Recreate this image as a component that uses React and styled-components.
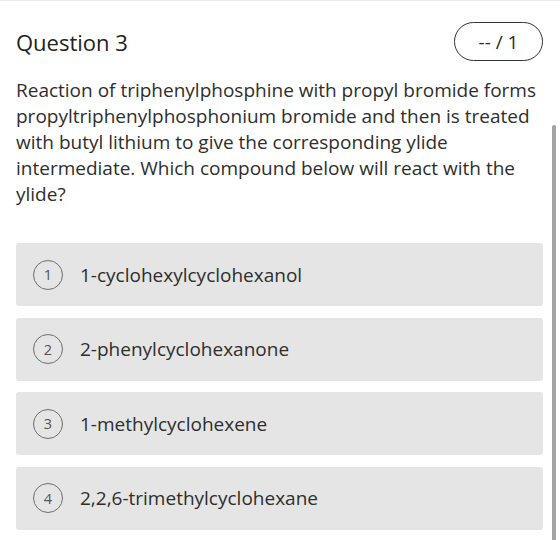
import React from "react";
import styled, { createGlobalStyle } from "styled-components";

const GlobalStyle = createGlobalStyle`
  html, body {
    margin: 0;
    padding: 0;
    background: #ffffff;
  }

  body {
    font-family: "Open Sans", "Liberation Sans", sans-serif;
    color: #2e2e2e;
  }
`;

const choices = [
  "1-cyclohexylcyclohexanol",
  "2-phenylcyclohexanone",
  "1-methylcyclohexene",
  "2,2,6-trimethylcyclohexane",
];

const App = () => {
  return (
    <>
      <GlobalStyle />
      <Container>
        <Header>
          <Title>Question 3</Title>
          <Score>-- / 1</Score>
        </Header>
        <Prompt>
          Reaction of triphenylphosphine with propyl bromide forms
          propyltriphenylphosphonium bromide and then is treated with butyl
          lithium to give the corresponding ylide intermediate. Which compound
          below will react with the ylide?
        </Prompt>
        <Choices>
          {choices.map((label, i) => (
            <Choice key={label}>
              <Num>{i + 1}</Num>
              <Label>{label}</Label>
            </Choice>
          ))}
        </Choices>
        <ScrollThumb />
      </Container>
    </>
  );
};

export default App;

const Container = styled.div`
  position: relative;
  width: 560px;
  height: 540px;
  box-sizing: border-box;
  border-top: 1px solid #e8e8e8;
  padding: 21px 17px 0 16px;
  overflow: hidden;
`;

const Header = styled.div`
  display: flex;
  justify-content: space-between;
  align-items: center;
`;

const Title = styled.h2`
  margin: 0;
  font-size: 22px;
  font-weight: 400;
  color: #222;
  line-height: 30px;
`;

const Score = styled.div`
  width: 89px;
  height: 39px;
  box-sizing: border-box;
  border: 1.5px solid #333;
  border-radius: 20px;
  display: flex;
  align-items: center;
  justify-content: center;
  font-size: 19px;
  color: #2a2a2a;
`;

const Prompt = styled.p`
  margin: 16px 0 0;
  font-size: 19px;
  line-height: 26px;
  color: #2e2e2e;
`;

const Choices = styled.div`
  display: flex;
  flex-direction: column;
  gap: 11.5px;
  margin-top: 36px;
`;

const Choice = styled.div`
  display: flex;
  align-items: center;
  gap: 17px;
  height: 63px;
  padding-left: 17px;
  background: #e5e5e5;
  border-radius: 3px;
`;

const Num = styled.span`
  width: 30px;
  height: 30px;
  box-sizing: border-box;
  border: 1.5px solid #6e6e6e;
  border-radius: 50%;
  display: flex;
  align-items: center;
  justify-content: center;
  font-size: 14.5px;
  color: #555;
`;

const Label = styled.span`
  font-size: 19px;
  color: #2e2e2e;
`;

const ScrollThumb = styled.div`
  position: absolute;
  top: 124px;
  right: 4px;
  width: 4px;
  height: 420px;
  background: #a3a3a3;
  border-radius: 2px;
`;
